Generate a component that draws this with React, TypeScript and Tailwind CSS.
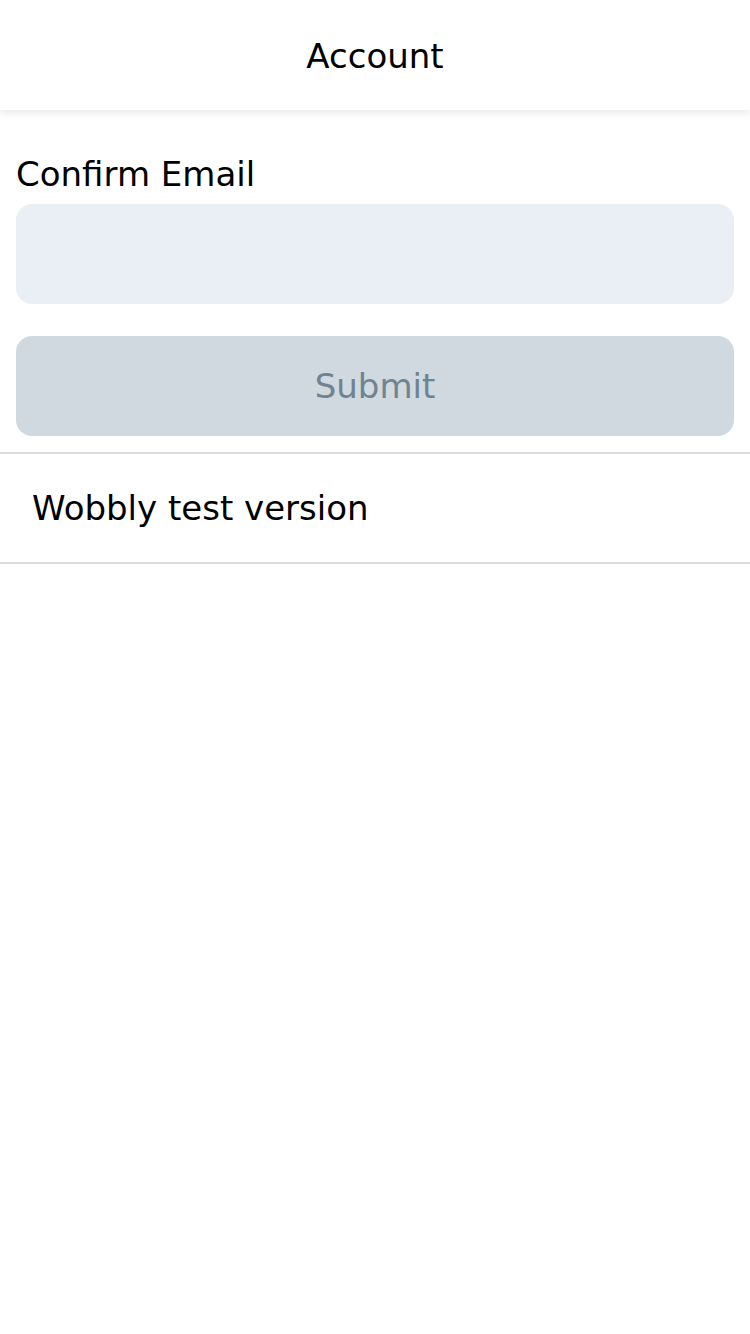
const font = { fontFamily: '"DejaVu Sans", sans-serif' };

export default function App() {
  return (
    <div className="min-h-[1334px] w-[750px] bg-white text-black" style={font}>
      <header className="relative z-10 flex h-[110px] items-center justify-center bg-white pt-[2px] shadow-[0_3px_8px_rgba(0,0,0,0.09)]">
        <h1 className="text-[34px] leading-[40px]">Account</h1>
      </header>

      <div className="px-4 pb-4 pt-[44px]">
        <label className="block text-[34px] leading-[40px]">Confirm Email</label>
        <div className="mt-[10px] h-[100px] rounded-2xl bg-[#e9eff4]" />
        <button
          disabled
          className="mt-8 flex h-[100px] w-full items-center justify-center rounded-2xl bg-[#cfd9df] text-[34px] leading-[40px] text-[#718391]"
        >
          Submit
        </button>
      </div>

      <div className="border-y-2 border-[#dcdcdc]">
        <div className="flex h-[108px] items-center pl-8 text-[34px] leading-[40px]">
          Wobbly test version
        </div>
      </div>
    </div>
  );
}
